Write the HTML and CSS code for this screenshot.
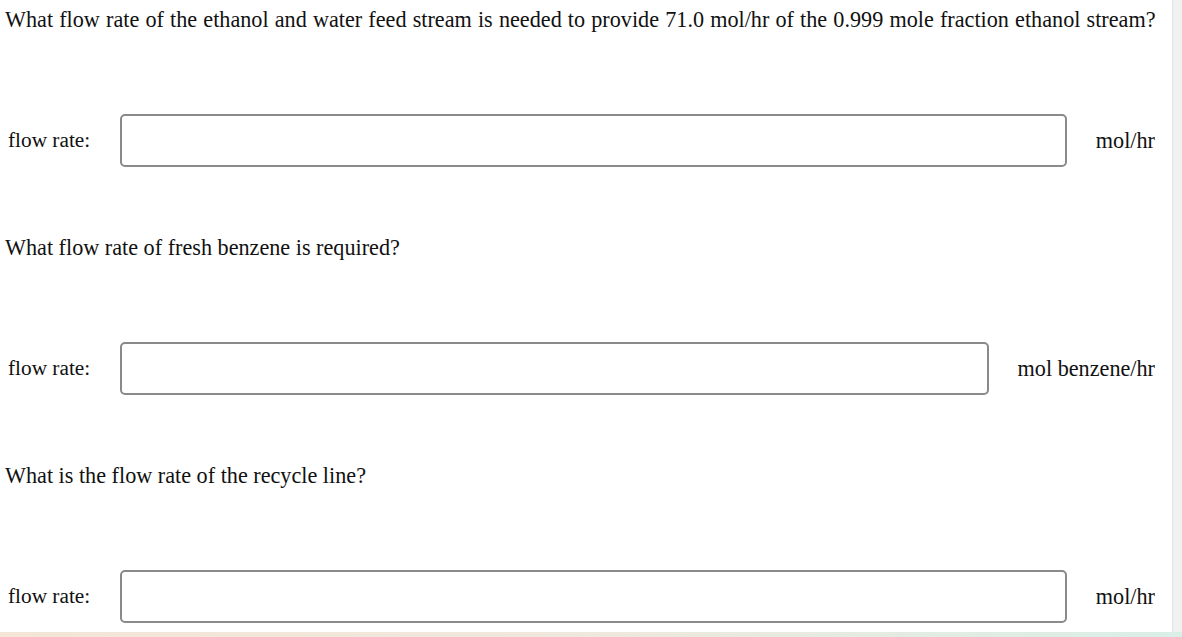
FILE: index.html
```html
<!DOCTYPE html>
<html>
<head>
<meta charset="utf-8">
<link rel="stylesheet" href="styles.css">
</head>
<body>
<div class="frame">
  <main class="content">
    <section class="block">
      <p class="question question-long">What flow rate of the ethanol and water feed stream is needed to provide 71.0 mol/hr of the 0.999 mole fraction ethanol stream?</p>
      <div class="answer">
        <span class="label">flow rate:</span>
        <input class="field" type="text">
        <span class="unit">mol/hr</span>
      </div>
    </section>
    <section class="block">
      <p class="question">What flow rate of fresh benzene is required?</p>
      <div class="answer">
        <span class="label">flow rate:</span>
        <input class="field" type="text">
        <span class="unit">mol benzene/hr</span>
      </div>
    </section>
    <section class="block">
      <p class="question">What is the flow rate of the recycle line?</p>
      <div class="answer">
        <span class="label">flow rate:</span>
        <input class="field" type="text">
        <span class="unit">mol/hr</span>
      </div>
    </section>
  </main>
  <div class="scrollbar"></div>
</div>
<div class="footer-strip"></div>
</body>
</html>
```
FILE: styles.css
```css
html, body {
  margin: 0;
  padding: 0;
  background: #ffffff;
}
body {
  width: 1182px;
  height: 637px;
  overflow: hidden;
  font-family: "Liberation Serif", "Times New Roman", serif;
  font-size: 22.2px;
  color: #111111;
}
.frame {
  display: flex;
  height: 632px;
}
.content {
  width: 1172px;
  display: flex;
  flex-direction: column;
  gap: 61px;
}
.scrollbar {
  width: 10px;
  background: #f1f1f1;
  border-left: 1px solid #e4e4e4;
  box-sizing: border-box;
}
.question {
  margin: 0;
  padding-left: 5px;
  height: 40px;
  line-height: 40px;
  white-space: nowrap;
}
.question-long {
  word-spacing: 0.6px;
}
.answer {
  margin-top: 74px;
  display: flex;
  align-items: center;
  height: 53px;
  padding-right: 17px;
}
.label {
  width: 120px;
  padding-left: 8px;
  box-sizing: border-box;
  flex: none;
  font-size: 21.3px;
}
.field {
  flex: 1;
  height: 53px;
  box-sizing: border-box;
  border: 2px solid #8a8a8a;
  border-radius: 5px;
  background: #fff;
  margin: 0;
  padding: 0 10px;
  font: inherit;
}
.unit {
  flex: none;
  margin-left: 29px;
}
.footer-strip {
  height: 5px;
  background: linear-gradient(90deg, #f4e5d6 0%, #efe8dc 50%, #d9efe7 100%);
}
```
